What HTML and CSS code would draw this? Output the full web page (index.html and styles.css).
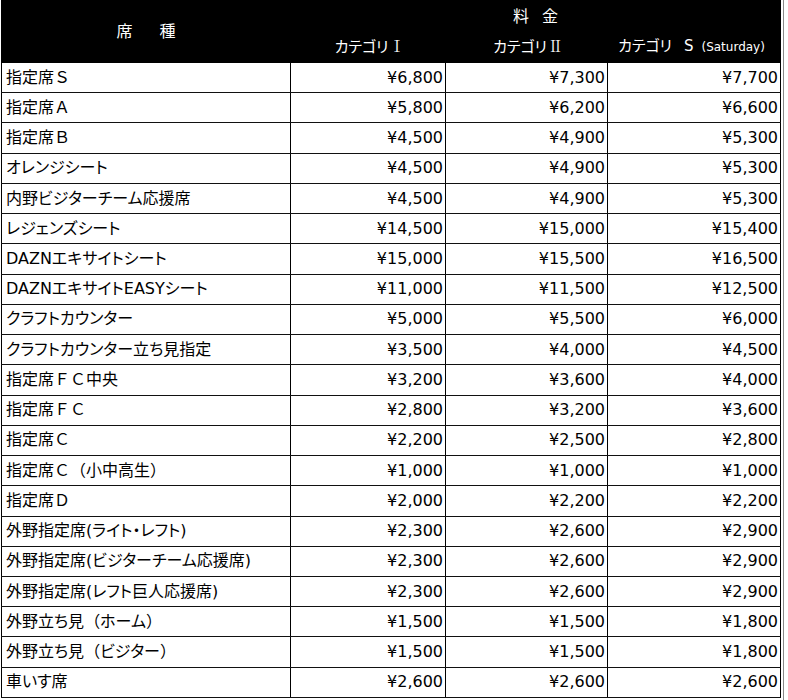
FILE: index.html
```html
<!DOCTYPE html>
<html lang="ja">
<head>
<meta charset="utf-8">
<title>料金表</title>
<link rel="stylesheet" href="styles.css">
</head>
<body>
<div class="frame">
<table class="prices">
  <colgroup>
    <col class="c-name">
    <col class="c-p1">
    <col class="c-p2">
    <col class="c-p3">
  </colgroup>
  <thead>
    <tr class="h1">
      <th rowspan="2" class="th-seat">席<span class="gap"></span>種</th>
      <th colspan="3" class="th-fee">料<span class="gap-s"></span>金</th>
    </tr>
    <tr class="h2">
      <th class="sub">カテゴリ<span class="roman">Ⅰ</span></th>
      <th class="sub">カテゴリ<span class="roman">Ⅱ</span></th>
      <th class="sub sub-s">カテゴリ<span class="s-letter">S</span><span class="sat">(Saturday)</span></th>
    </tr>
  </thead>
  <tbody>
    <tr><td class="name">指定席<span class="fw">Ｓ</span></td><td class="p">¥6,800</td><td class="p p2">¥7,300</td><td class="p">¥7,700</td></tr>
    <tr><td class="name">指定席<span class="fw">Ａ</span></td><td class="p">¥5,800</td><td class="p p2">¥6,200</td><td class="p">¥6,600</td></tr>
    <tr><td class="name">指定席<span class="fw">Ｂ</span></td><td class="p">¥4,500</td><td class="p p2">¥4,900</td><td class="p">¥5,300</td></tr>
    <tr><td class="name">オレンジシート</td><td class="p">¥4,500</td><td class="p p2">¥4,900</td><td class="p">¥5,300</td></tr>
    <tr><td class="name">内野ビジターチーム応援席</td><td class="p">¥4,500</td><td class="p p2">¥4,900</td><td class="p">¥5,300</td></tr>
    <tr><td class="name">レジェンズシート</td><td class="p">¥14,500</td><td class="p p2">¥15,000</td><td class="p">¥15,400</td></tr>
    <tr><td class="name">DAZNエキサイトシート</td><td class="p">¥15,000</td><td class="p p2">¥15,500</td><td class="p">¥16,500</td></tr>
    <tr><td class="name">DAZNエキサイトEASYシート</td><td class="p">¥11,000</td><td class="p p2">¥11,500</td><td class="p">¥12,500</td></tr>
    <tr><td class="name">クラフトカウンター</td><td class="p">¥5,000</td><td class="p p2">¥5,500</td><td class="p">¥6,000</td></tr>
    <tr><td class="name">クラフトカウンター立ち見指定</td><td class="p">¥3,500</td><td class="p p2">¥4,000</td><td class="p">¥4,500</td></tr>
    <tr><td class="name">指定席<span class="fw">ＦＣ</span>中央</td><td class="p">¥3,200</td><td class="p p2">¥3,600</td><td class="p">¥4,000</td></tr>
    <tr><td class="name">指定席<span class="fw">ＦＣ</span></td><td class="p">¥2,800</td><td class="p p2">¥3,200</td><td class="p">¥3,600</td></tr>
    <tr><td class="name">指定席<span class="fw">Ｃ</span></td><td class="p">¥2,200</td><td class="p p2">¥2,500</td><td class="p">¥2,800</td></tr>
    <tr><td class="name">指定席<span class="fw">Ｃ（</span>小中高生<span class="fw">）</span></td><td class="p">¥1,000</td><td class="p p2">¥1,000</td><td class="p">¥1,000</td></tr>
    <tr><td class="name">指定席<span class="fw">Ｄ</span></td><td class="p">¥2,000</td><td class="p p2">¥2,200</td><td class="p">¥2,200</td></tr>
    <tr><td class="name">外野指定席(ライト・レフト)</td><td class="p">¥2,300</td><td class="p p2">¥2,600</td><td class="p">¥2,900</td></tr>
    <tr><td class="name">外野指定席(ビジターチーム応援席)</td><td class="p">¥2,300</td><td class="p p2">¥2,600</td><td class="p">¥2,900</td></tr>
    <tr><td class="name">外野指定席(レフト巨人応援席)</td><td class="p">¥2,300</td><td class="p p2">¥2,600</td><td class="p">¥2,900</td></tr>
    <tr><td class="name">外野立ち見<span class="fw">（</span>ホーム<span class="fw">）</span></td><td class="p">¥1,500</td><td class="p p2">¥1,500</td><td class="p">¥1,800</td></tr>
    <tr><td class="name">外野立ち見<span class="fw">（</span>ビジター<span class="fw">）</span></td><td class="p">¥1,500</td><td class="p p2">¥1,500</td><td class="p">¥1,800</td></tr>
    <tr><td class="name">車いす席</td><td class="p">¥2,600</td><td class="p p2">¥2,600</td><td class="p">¥2,600</td></tr>
  </tbody>
</table>
</div>
</body>
</html>
```
FILE: styles.css
```css
html, body {
  margin: 0;
  padding: 0;
  background: #ffffff;
}

body {
  font-family: "DejaVu Sans", "Noto Sans CJK JP", sans-serif;
  font-size: 16px;
  color: #000;
  font-feature-settings: "palt";
}

.frame {
  display: inline-block;
  margin-left: 1px;
  padding: 0 2px 2px 0;
  border-right: 1px solid #8a8a8a;
  border-bottom: 1px solid #8a8a8a;
}

.prices {
  border-collapse: collapse;
  table-layout: fixed;
  width: 779px;
  border: 1px solid #000;
}

.c-name { width: 289px; }
.c-p1 { width: 155px; }
.c-p2 { width: 162px; }
.c-p3 { width: 173px; }

thead th {
  background: #000;
  color: #fff;
  font-weight: normal;
  border: 1px solid #000;
  padding: 0;
  line-height: 1;
}

.h1 { height: 31px; }
.h2 { height: 31px; }

.th-seat {
  font-size: 16px;
  vertical-align: middle;
}

.gap { display: inline-block; width: 27px; }
.gap-s { display: inline-block; width: 13px; }

.th-fee {
  font-size: 16px;
  vertical-align: middle;
  padding-top: 2px;
}

.sub {
  font-size: 15px;
  vertical-align: middle;
  padding-bottom: 1px;
}

.sub-s {
  padding-right: 5px;
}

.roman {
  font-family: "Noto Serif CJK JP", "Noto Sans CJK JP", serif;
  font-feature-settings: normal;
  display: inline-block;
  width: 12px;
  text-align: center;
  margin-left: 1px;
}

.s-letter {
  margin-left: 12px;
  font-size: 15px;
}

.sat {
  margin-left: 8px;
  font-size: 12px;
}

tbody tr {
  height: 30.24px;
}

tbody td {
  border-top: 1px solid #111;
  border-bottom: 1px solid #111;
  border-left: 1px solid #000;
  border-right: 1px solid #000;
  padding: 0;
  line-height: 1;
  white-space: nowrap;
}

.name {
  padding-left: 4px;
  text-align: left;
}

.p {
  text-align: right;
  padding-right: 2px;
}

.p2 {
  border-left-color: #9a9a9a;
}

.fw {
  font-feature-settings: normal;
}
```
